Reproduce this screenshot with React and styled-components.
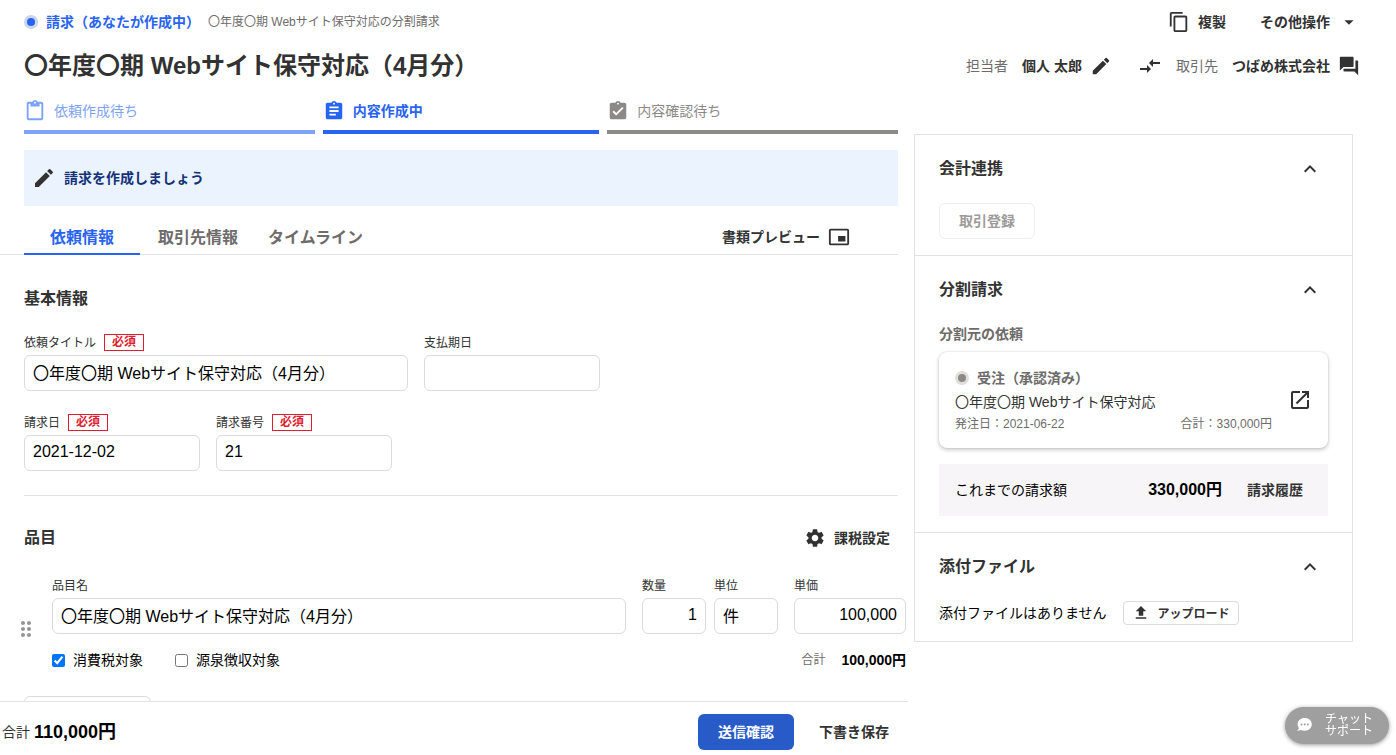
import React from "react";
import styled, { createGlobalStyle, css } from "styled-components";
import {
  MdArrowDropDown,
  MdAssignment,
  MdAssignmentTurnedIn,
  MdCompareArrows,
  MdContentCopy,
  MdContentPaste,
  MdDragIndicator,
  MdEdit,
  MdForum,
  MdKeyboardArrowUp,
  MdOpenInNew,
  MdPictureInPictureAlt,
  MdSettings,
} from "react-icons/md";

const GlobalStyle = createGlobalStyle`
  *, *::before, *::after { box-sizing: border-box; }
  body {
    margin: 0;
    background: #fff;
    color: #323232;
    font-family: "Liberation Sans", "Noto Sans CJK JP", sans-serif;
    font-size: 14px;
    line-height: 20px;
  }
  h1, h2, h3, p { margin: 0; }
  button, input { font-family: inherit; }
  svg { display: block; flex: none; }
`;

const Page = styled.div`
  display: flex;
  flex-direction: column;
  height: 100vh;
`;

const Header = styled.header`
  display: flex;
  flex-direction: column;
  gap: 14px;
  padding: 8px 36px 10px 24px;
`;

const HeaderRow = styled.div`
  display: flex;
  align-items: center;
  justify-content: space-between;
  height: ${(p) => p.$height}px;
`;

const Inline = styled.div`
  display: flex;
  align-items: center;
  gap: ${(p) => p.$gap}px;
`;

const StatusDot = styled.span`
  width: 14px;
  height: 14px;
  border: 3px solid ${(p) => (p.$active ? "#c8d6ee" : "#e1dfdc")};
  border-radius: 50%;
  background: ${(p) => (p.$active ? "#2864f0" : "#8c8989")};
`;

const StatusText = styled.span`
  font-weight: bold;
  color: ${(p) => (p.$active ? "#2864f0" : "#6e6b6b")};
`;

const Note = styled.span`
  font-size: 12px;
  color: #6e6b6b;
`;

const Title = styled.h1`
  font-size: 24px;
  line-height: 32px;
`;

const TextButton = styled.button`
  display: flex;
  align-items: center;
  gap: 8px;
  padding: 0;
  border: 0;
  background: none;
  color: #323232;
  font-size: 14px;
  font-weight: bold;
  line-height: 20px;
  white-space: nowrap;
`;

const Muted = styled.span`
  color: #6e6b6b;
`;

const MergeIcon = styled(MdCompareArrows).attrs({ size: 24 })`
  margin-left: 12px;
`;

const Body = styled.div`
  flex: 1;
  min-height: 0;
  display: grid;
  grid-template-columns: minmax(0, 1fr) 439px;
  grid-template-rows: minmax(0, 1fr);
  gap: 6px;
  padding-right: 43px;
`;

const Column = styled.main`
  display: flex;
  flex-direction: column;
  min-height: 0;
`;

const Scroll = styled.div`
  flex: 1;
  min-height: 0;
  overflow: hidden auto;
  scrollbar-width: none;
  padding: 0 10px 0 24px;
`;

const Steps = styled.ol`
  display: flex;
  gap: 8px;
  margin: 0;
  padding: 0;
  list-style: none;
`;

const stepColors = { done: "#7da2f8", current: "#2864f0", next: "#8c8989" };

const Step = styled.li`
  flex: 1 1 auto;
  display: flex;
  align-items: center;
  gap: 8px;
  padding: 8px 0;
  border-bottom: 4px solid ${(p) => stepColors[p.$state]};
  color: ${(p) => stepColors[p.$state]};
  font-weight: ${(p) => (p.$state === "current" ? "bold" : "normal")};
  line-height: 22px;
`;

const Banner = styled.div`
  display: flex;
  align-items: center;
  gap: 8px;
  height: 56px;
  margin-top: 16px;
  padding: 0 8px;
  background: #ebf3ff;
`;

const BannerText = styled.p`
  font-weight: bold;
  color: #143278;
`;

const TabBar = styled.div`
  display: flex;
  margin: 14px 0 0 -24px;
  padding: 0 48px 0 24px;
  border-bottom: 1px solid #e4e2e2;
`;

const Tab = styled.button`
  height: 35px;
  min-width: 116px;
  margin-bottom: -1px;
  padding: 0 12px 2px;
  border: 0;
  border-bottom: 2px solid ${(p) => (p.$active ? "#2864f0" : "transparent")};
  background: none;
  color: ${(p) => (p.$active ? "#2864f0" : "#6e6b6b")};
  font-size: 16px;
  font-weight: bold;
`;

const PreviewButton = styled(TextButton)`
  margin-left: auto;
`;

const SectionTitle = styled.h2`
  font-size: 16px;
  line-height: 24px;
`;

const FormSection = styled.section`
  display: flex;
  flex-direction: column;
  gap: 23px;
  padding: 32px 0 24px;
  border-bottom: 1px solid #e4e2e2;
`;

const FieldRow = styled.div`
  display: flex;
  gap: 16px;
`;

const FieldLabel = styled.label`
  display: flex;
  align-items: center;
  gap: 8px;
  height: 17px;
  font-size: 12px;
  line-height: 16px;
`;

const Required = styled.span`
  width: 40px;
  border: 1px solid #dc1e32;
  color: #dc1e32;
  font-weight: bold;
  line-height: 15px;
  text-align: center;
`;

const FieldBox = styled.div`
  display: flex;
  flex-direction: column;
  gap: 4px;
  ${(p) => (p.$grow ? css`flex: 1; min-width: 0;` : css`width: ${p.$width}px;`)}
`;

const Input = styled.input`
  width: 100%;
  height: 36px;
  padding: 0 8px 2px;
  border: 1px solid #dcdada;
  border-radius: 6px;
  background: #fff;
  color: #000;
  font-size: 16px;
  text-align: ${(p) => p.$align || "left"};
`;

const ItemsHead = styled.div`
  display: flex;
  align-items: center;
  justify-content: space-between;
  height: 36px;
  margin-top: 24px;
  padding-right: 8px;
`;

const Item = styled.div`
  display: flex;
  align-items: center;
  gap: 14px;
  margin: 21px -8px 0 -10px;
`;

const DragHandle = styled.button`
  padding: 0;
  border: 0;
  background: none;
  color: #969494;
`;

const ItemBody = styled.div`
  flex: 1;
  min-width: 0;
  padding-bottom: 11px;
`;

const ItemFoot = styled.div`
  display: flex;
  align-items: center;
  justify-content: space-between;
  margin-top: 16px;
  color: #000;
`;

const Check = styled.label`
  display: flex;
  align-items: center;
  gap: 8px;

  input {
    width: 13px;
    height: 13px;
    margin: 0;
  }
`;

const Amount = styled.strong`
  color: #000;
  font-size: ${(p) => p.$size}px;
`;

const OutlineButton = styled.button`
  display: flex;
  align-items: center;
  justify-content: center;
  gap: 8px;
  height: ${(p) => (p.$small ? 24 : 36)}px;
  min-width: 96px;
  padding: 0 8px 2px;
  border: 1px solid #dcdada;
  border-radius: ${(p) => (p.$small ? 4 : 6)}px;
  background: #fff;
  color: #323232;
  font-size: ${(p) => (p.$small ? 12 : 14)}px;
  font-weight: bold;

  &:disabled {
    border-color: #efeded;
    color: #9d9a9a;
  }
`;

const AddRowButton = styled(OutlineButton)`
  width: 127px;
  margin-top: 15px;
`;

const Footer = styled.footer`
  display: flex;
  align-items: center;
  justify-content: space-between;
  padding: 12px 19px 5px 2px;
  border-top: 1px solid #e4e2e2;
  background: #fff;
`;

const PrimaryButton = styled.button`
  width: 96px;
  height: 36px;
  padding: 0 0 2px;
  border: 0;
  border-radius: 6px;
  background: #285ac8;
  color: #fff;
  font-size: 14px;
  font-weight: bold;
`;

const Aside = styled.aside`
  align-self: start;
  margin-top: 42px;
  border: 1px solid #e4e2e2;
`;

const Panel = styled.section`
  padding: 22px 24px 16px;

  & + & {
    border-top: 1px solid #e4e2e2;
  }
`;

const PanelHead = styled.div`
  display: flex;
  align-items: center;
  justify-content: space-between;
  margin-bottom: 22px;
  padding-right: 6px;
`;

const IconButton = styled.button`
  padding: 0;
  border: 0;
  background: none;
  color: #323232;
`;

const SubTitle = styled.h3`
  color: #6e6b6b;
  font-size: 14px;
  line-height: 20px;
`;

const SourceCard = styled.a`
  display: flex;
  align-items: center;
  gap: 16px;
  margin: 8px 0 16px;
  padding: 16px;
  border-radius: 8px;
  background: #fff;
  box-shadow: 0 0 2px rgba(0, 0, 0, 0.16), 0 2px 4px rgba(0, 0, 0, 0.2);
  color: #323232;
  text-decoration: none;
`;

const SourceBody = styled.div`
  flex: 1;
  display: flex;
  flex-direction: column;
  gap: 2px;
`;

const SourceName = styled.p`
  line-height: 24px;
`;

const SourceMeta = styled.div`
  display: flex;
  justify-content: space-between;
  color: #6e6b6b;
  font-size: 12px;
  line-height: 16px;
`;

const BilledRow = styled.div`
  display: flex;
  align-items: center;
  gap: 25px;
  height: 52px;
  padding: 0 25px 0 16px;
  background: #f7f5f7;
  color: #000;
`;

const BilledLabel = styled.span`
  flex: 1;
`;

const AttachRow = styled.div`
  display: flex;
  align-items: center;
  gap: 16px;
  color: #000;
`;

const ChatButton = styled.button`
  position: fixed;
  right: 7px;
  bottom: 11px;
  display: flex;
  align-items: center;
  gap: 12px;
  width: 104px;
  height: 37px;
  padding: 0 0 2px 11px;
  border: 0;
  border-radius: 19px;
  background: #9f9f9f;
  box-shadow: 0 1px 4px rgba(0, 0, 0, 0.4);
  color: #fff;
  font-size: 12px;
  line-height: 12px;
  text-align: left;
`;

function Field({ id, label, required, width, grow, value = "", align }) {
  return (
    <FieldBox $width={width} $grow={grow}>
      <FieldLabel htmlFor={id}>
        {label}
        {required && <Required>必須</Required>}
      </FieldLabel>
      <Input id={id} defaultValue={value} $align={align} />
    </FieldBox>
  );
}

function PanelSection({ title, children }) {
  return (
    <Panel>
      <PanelHead>
        <SectionTitle>{title}</SectionTitle>
        <IconButton aria-label={`${title}を閉じる`}>
          <MdKeyboardArrowUp size={24} />
        </IconButton>
      </PanelHead>
      {children}
    </Panel>
  );
}

function UploadIcon() {
  return (
    <svg width="18" height="18" viewBox="0 0 24 24" fill="currentColor" aria-hidden="true">
      <path d="M9 17h6v-6h4l-7-7-7 7h4zM5 19h14v2H5z" />
    </svg>
  );
}

function BubbleIcon() {
  return (
    <svg width="17" height="15" viewBox="0 0 17 15" aria-hidden="true">
      <path
        d="M8.700 1C4.700 1 1.600 3.700 1.600 7.200c0 1.500.5 2.800 1.400 3.900L1.200 14l3.600-.9c1.100.5 2.400.7 3.900.7 4 0 7.100-2.900 7.100-6.500S12.700 1 8.700 1z"
        fill="#fff"
      />
      <circle cx="5.500" cy="7.400" r="1" fill="#9f9f9f" />
      <circle cx="8.700" cy="7.400" r="1" fill="#9f9f9f" />
      <circle cx="11.900" cy="7.400" r="1" fill="#9f9f9f" />
    </svg>
  );
}

export default function App() {
  return (
    <Page lang="ja">
      <GlobalStyle />
      <Header>
        <HeaderRow $height={28}>
          <Inline $gap={8}>
            <StatusDot $active />
            <StatusText $active>請求（あなたが作成中）</StatusText>
            <Note>〇年度〇期 Webサイト保守対応の分割請求</Note>
          </Inline>
          <Inline $gap={34}>
            <TextButton>
              <MdContentCopy size={22} />
              複製
            </TextButton>
            <TextButton>
              その他操作
              <MdArrowDropDown size={22} />
            </TextButton>
          </Inline>
        </HeaderRow>
        <HeaderRow $height={32}>
          <Title>〇年度〇期 Webサイト保守対応（4月分）</Title>
          <Inline $gap={14}>
            <Muted>担当者</Muted>
            <TextButton>
              個人 太郎
              <MdEdit size={22} />
            </TextButton>
            <MergeIcon />
            <Muted>取引先</Muted>
            <TextButton>
              つばめ株式会社
              <MdForum size={22} />
            </TextButton>
          </Inline>
        </HeaderRow>
      </Header>

      <Body>
        <Column>
          <Scroll>
            <Steps>
              <Step $state="done">
                <MdContentPaste size={22} />
                依頼作成待ち
              </Step>
              <Step $state="current" aria-current="step">
                <MdAssignment size={22} />
                内容作成中
              </Step>
              <Step $state="next">
                <MdAssignmentTurnedIn size={22} />
                内容確認待ち
              </Step>
            </Steps>

            <Banner>
              <MdEdit size={24} />
              <BannerText>請求を作成しましょう</BannerText>
            </Banner>

            <TabBar>
              <Tab $active>依頼情報</Tab>
              <Tab>取引先情報</Tab>
              <Tab>タイムライン</Tab>
              <PreviewButton>
                書類プレビュー
                <MdPictureInPictureAlt size={22} />
              </PreviewButton>
            </TabBar>

            <FormSection>
              <SectionTitle>基本情報</SectionTitle>
              <FieldRow>
                <Field id="title" label="依頼タイトル" required width={384} value="〇年度〇期 Webサイト保守対応（4月分）" />
                <Field id="due" label="支払期日" width={176} />
              </FieldRow>
              <FieldRow>
                <Field id="date" label="請求日" required width={176} value="2021-12-02" />
                <Field id="number" label="請求番号" required width={176} value="21" />
              </FieldRow>
            </FormSection>

            <section>
              <ItemsHead>
                <SectionTitle>品目</SectionTitle>
                <TextButton>
                  <MdSettings size={22} />
                  課税設定
                </TextButton>
              </ItemsHead>
              <Item>
                <DragHandle aria-label="並べ替え">
                  <MdDragIndicator size={24} />
                </DragHandle>
                <ItemBody>
                  <FieldRow>
                    <Field id="item" label="品目名" grow value="〇年度〇期 Webサイト保守対応（4月分）" />
                    <Inline $gap={8}>
                      <Field id="quantity" label="数量" width={64} value="1" align="right" />
                      <Field id="unit" label="単位" width={64} value="件" />
                    </Inline>
                    <Field id="price" label="単価" width={112} value="100,000" align="right" />
                  </FieldRow>
                  <ItemFoot>
                    <Inline $gap={32}>
                      <Check>
                        <input type="checkbox" defaultChecked />
                        消費税対象
                      </Check>
                      <Check>
                        <input type="checkbox" />
                        源泉徴収対象
                      </Check>
                    </Inline>
                    <Inline $gap={16}>
                      <Note>合計</Note>
                      <Amount $size={14}>100,000円</Amount>
                    </Inline>
                  </ItemFoot>
                </ItemBody>
              </Item>
              <AddRowButton aria-label="品目を追加" />
            </section>
          </Scroll>

          <Footer>
            <Inline $gap={4}>
              合計
              <Amount $size={18}>110,000円</Amount>
            </Inline>
            <Inline $gap={25}>
              <PrimaryButton>送信確認</PrimaryButton>
              <TextButton>下書き保存</TextButton>
            </Inline>
          </Footer>
        </Column>

        <Aside>
          <PanelSection title="会計連携">
            <OutlineButton disabled>取引登録</OutlineButton>
          </PanelSection>
          <PanelSection title="分割請求">
            <SubTitle>分割元の依頼</SubTitle>
            <SourceCard href="#source">
              <SourceBody>
                <Inline $gap={8}>
                  <StatusDot />
                  <StatusText>受注（承認済み）</StatusText>
                </Inline>
                <SourceName>〇年度〇期 Webサイト保守対応</SourceName>
                <SourceMeta>
                  <span>発注日：2021-06-22</span>
                  <span>合計：330,000円</span>
                </SourceMeta>
              </SourceBody>
              <MdOpenInNew size={24} />
            </SourceCard>
            <BilledRow>
              <BilledLabel>これまでの請求額</BilledLabel>
              <Amount $size={16}>330,000円</Amount>
              <TextButton>請求履歴</TextButton>
            </BilledRow>
          </PanelSection>
          <PanelSection title="添付ファイル">
            <AttachRow>
              添付ファイルはありません
              <OutlineButton $small>
                <UploadIcon />
                アップロード
              </OutlineButton>
            </AttachRow>
          </PanelSection>
        </Aside>
      </Body>

      <ChatButton>
        <BubbleIcon />
        <span>
          チャット
          <br />
          サポート
        </span>
      </ChatButton>
    </Page>
  );
}
